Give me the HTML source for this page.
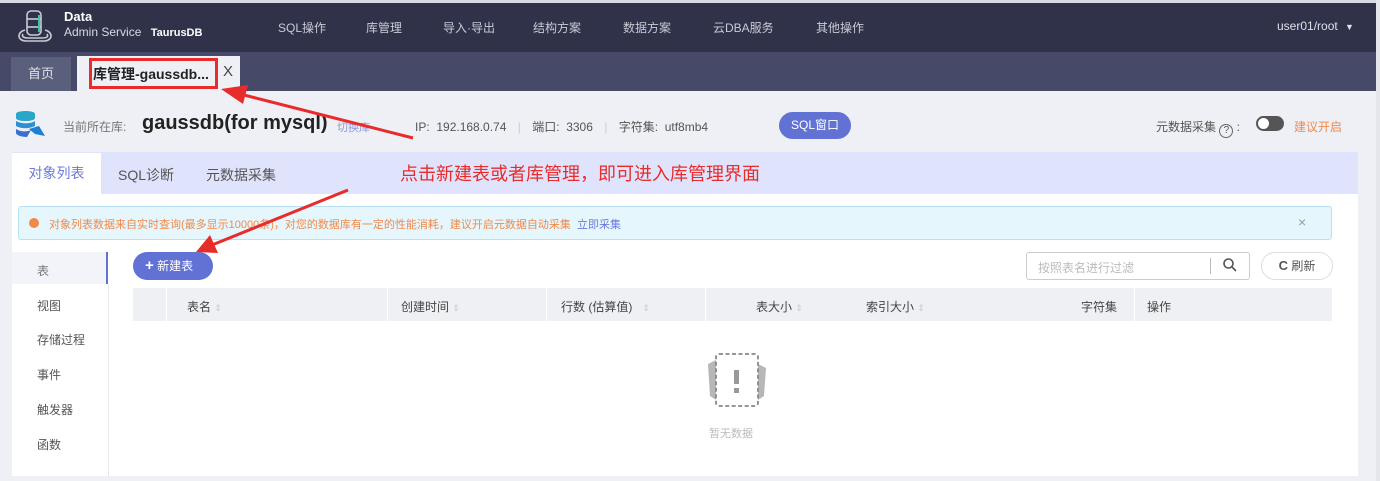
<!DOCTYPE html>
<html><head><meta charset="utf-8"><style>
*{margin:0;padding:0;box-sizing:border-box}
body{width:1380px;height:481px;overflow:hidden;background:#eef0f5;font-family:"Liberation Sans","Noto Sans CJK SC",sans-serif;position:relative;font-size:12px;color:#333}
.a{position:absolute;white-space:nowrap}
</style></head><body>
<div class="a" style="left:0;top:0;width:1380px;height:3px;background:#d8dae2"></div>
<div class="a" style="left:0;top:3px;width:1376px;height:49px;background:#2f3249"></div>
<div class="a" style="left:0;top:52px;width:1376px;height:39px;background:#464a68"></div>
<div class="a" style="left:1376px;top:0;width:4px;height:481px;background:#e4e6ec"></div>
<!-- logo -->
<svg class="a" style="left:15px;top:10px" width="40" height="34" viewBox="0 0 40 34" fill="none" stroke="#c9cbd6" stroke-width="1.6">
<rect x="12" y="1" width="14" height="24" rx="4"/><line x1="12" y1="9" x2="26" y2="9"/><line x1="12" y1="17" x2="26" y2="17"/>
<path d="M10 20 C2 22 2 30 10 31 L30 31 C38 30 38 22 30 20"/><path d="M8 24 C6 27 10 28 13 28 L27 28 C31 28 34 27 32 24"/>
<line x1="24" y1="5" x2="24" y2="22" stroke="#3bc7a2" stroke-width="2"/></svg>
<div class="a" style="left:64px;top:9px;color:#fff;font-size:13px;font-weight:bold">Data</div>
<div class="a" style="left:64px;top:25px;color:#d9dbe4;font-size:12px">Admin Service <b style="color:#fff;margin-left:6px;font-size:11px">TaurusDB</b></div>
<div class="a" style="left:278px;top:19px;color:#c9cbd6;font-size:12px;word-spacing:0">SQL操作</div>
<div class="a" style="left:366px;top:19px;color:#c9cbd6">库管理</div>
<div class="a" style="left:443px;top:19px;color:#c9cbd6">导入·导出</div>
<div class="a" style="left:533px;top:19px;color:#c9cbd6">结构方案</div>
<div class="a" style="left:623px;top:19px;color:#c9cbd6">数据方案</div>
<div class="a" style="left:713px;top:19px;color:#c9cbd6">云DBA服务</div>
<div class="a" style="left:816px;top:19px;color:#c9cbd6">其他操作</div>
<div class="a" style="left:1277px;top:19px;color:#dfe1e9;font-size:12px">user01/root <span style="font-size:9px;margin-left:4px">▼</span></div>
<!-- tabs -->
<div class="a" style="left:11px;top:57px;width:60px;height:34px;background:#5a5f7c;color:#e0e2ea;font-size:13px;text-align:center;line-height:34px">首页</div>
<div class="a" style="left:77px;top:56px;width:163px;height:35px;background:#eef0f5"></div>
<div class="a" style="left:89px;top:58px;width:129px;height:31px;border:3px solid #e82b2b"></div>
<div class="a" style="left:93px;top:64px;font-size:14px;font-weight:bold;color:#222">库管理-gaussdb...</div>
<div class="a" style="left:223px;top:63px;font-size:15px;color:#444">X</div>
<!-- db row -->
<svg class="a" style="left:13px;top:110px" width="34" height="30" viewBox="0 0 34 30">
<path d="M3 4 C3 0 22 0 22 4 L22 8 C22 12 3 12 3 8Z" fill="#2aa6c8"/><path d="M3 11 C8 14 18 14 22 11 L22 16 C16 19 8 19 3 16Z" fill="#2f8fd4"/><path d="M3 19 C8 22 14 22 18 20 L14 27 C8 27 3 25 3 23Z" fill="#3a6fd0"/><path d="M16 19 L26 16 L32 26 L22 24Z" fill="#1f7fd0"/></svg>
<div class="a" style="left:63px;top:118px;color:#777;font-size:12px">当前所在库:</div>
<div class="a" style="left:142px;top:112px;font-size:20px;font-weight:bold;color:#222">gaussdb(for mysql)</div>
<div class="a" style="left:337px;top:119px;color:#8c99d8;font-size:11px">切换库</div>
<div class="a" style="left:415px;top:118px;color:#555;font-size:12px">IP: &nbsp;192.168.0.74 <span style="color:#ccc;margin:0 8px">|</span> 端口: &nbsp;3306 <span style="color:#ccc;margin:0 8px">|</span> 字符集: &nbsp;utf8mb4</div>
<div class="a" style="left:779px;top:112px;width:72px;height:27px;border-radius:14px;background:#6272d4;color:#fff;font-size:12px;text-align:center;line-height:27px">SQL窗口</div>
<div class="a" style="left:1156px;top:118px;color:#555;font-size:12px">元数据采集 <span style="display:inline-block;width:14px;height:14px;border:1px solid #666;border-radius:50%;font-size:10px;text-align:center;line-height:12px;vertical-align:-2px">?</span> :</div>
<div class="a" style="left:1256px;top:116px;width:28px;height:15px;border-radius:8px;background:#555"><div style="position:absolute;left:2px;top:2px;width:11px;height:11px;border-radius:50%;background:#fff"></div></div>
<div class="a" style="left:1294px;top:118px;color:#f08a4b;font-size:12px">建议开启</div>
<!-- subtabs -->
<div class="a" style="left:12px;top:152px;width:1346px;height:42px;background:#dfe3fb"></div>
<div class="a" style="left:12px;top:153px;width:89px;height:41px;background:#fff;color:#6b7bd8;font-size:14px;text-align:center;line-height:41px">对象列表</div>
<div class="a" style="left:118px;top:165px;color:#555;font-size:14px">SQL诊断</div>
<div class="a" style="left:206px;top:165px;color:#555;font-size:14px">元数据采集</div>
<div class="a" style="left:400px;top:160px;color:#e82b2b;font-size:18px">点击新建表或者库管理，即可进入库管理界面</div>
<!-- panel -->
<div class="a" style="left:12px;top:194px;width:1346px;height:282px;background:#fff"></div>
<div class="a" style="left:18px;top:206px;width:1314px;height:34px;background:#e6f6fd;border:1px solid #b9e1f2;border-radius:3px"></div>
<div class="a" style="left:29px;top:218px;width:10px;height:10px;border-radius:50%;background:#f08a4b"></div>
<div class="a" style="left:49px;top:216px;color:#f08a4b;font-size:11px">对象列表数据来自实时查询(最多显示10000条)，对您的数据库有一定的性能消耗，建议开启元数据自动采集 &nbsp;<span style="color:#6b7bd8">立即采集</span></div>
<div class="a" style="left:1298px;top:214px;color:#999;font-size:14px">×</div>
<!-- side menu -->
<div class="a" style="left:12px;top:252px;width:96px;height:32px;background:#f3f4fa"></div>
<div class="a" style="left:106px;top:252px;width:2px;height:32px;background:#6272d4"></div>
<div class="a" style="left:108px;top:284px;width:1px;height:192px;background:#e8e8e8"></div>
<div class="a" style="left:37px;top:262px;color:#777;font-size:12px">表</div>
<div class="a" style="left:37px;top:297px;color:#555">视图</div>
<div class="a" style="left:37px;top:331px;color:#555">存储过程</div>
<div class="a" style="left:37px;top:366px;color:#555">事件</div>
<div class="a" style="left:37px;top:401px;color:#555">触发器</div>
<div class="a" style="left:37px;top:436px;color:#555">函数</div>
<div class="a" style="left:133px;top:252px;width:80px;height:28px;border-radius:14px;background:#6272d4;color:#fff;font-size:12px;line-height:28px;padding-left:12px"><b style="font-size:15px">+</b> 新建表</div>
<!-- search -->
<div class="a" style="left:1026px;top:252px;width:224px;height:28px;border:1px solid #ccc;border-radius:3px;background:#fff"></div>
<div class="a" style="left:1038px;top:259px;color:#bbb;font-size:12px">按照表名进行过滤</div>
<div class="a" style="left:1210px;top:258px;width:1px;height:16px;background:#bbb"></div>
<svg class="a" style="left:1222px;top:257px" width="16" height="16" viewBox="0 0 16 16" fill="none" stroke="#555" stroke-width="1.6"><circle cx="6.5" cy="6.5" r="4.5"/><line x1="10" y1="10" x2="14" y2="14"/></svg>
<div class="a" style="left:1261px;top:252px;width:72px;height:28px;border:1px solid #ddd;border-radius:14px;text-align:center;line-height:26px;color:#555;font-size:12px"><b style="font-size:13px">C</b> 刷新</div>
<!-- table header -->
<div class="a" style="left:133px;top:288px;width:1199px;height:33px;background:#eef0f4"></div>
<div class="a" style="left:166px;top:288px;width:1px;height:33px;background:#fff"></div>
<div class="a" style="left:387px;top:288px;width:1px;height:33px;background:#fff"></div>
<div class="a" style="left:546px;top:288px;width:1px;height:33px;background:#fff"></div>
<div class="a" style="left:705px;top:288px;width:1px;height:33px;background:#fff"></div>
<div class="a" style="left:1134px;top:288px;width:1px;height:33px;background:#fff"></div>
<div class="a" style="left:187px;top:298px;color:#444">表名 <span style="color:#ccc;font-size:9px">⇕</span></div>
<div class="a" style="left:401px;top:298px;color:#444">创建时间 <span style="color:#ccc;font-size:9px">⇕</span></div>
<div class="a" style="left:561px;top:298px;color:#444">行数 (估算值) &nbsp;&nbsp;<span style="color:#ccc;font-size:9px">⇕</span></div>
<div class="a" style="left:756px;top:298px;color:#444">表大小 <span style="color:#ccc;font-size:9px">⇕</span></div>
<div class="a" style="left:866px;top:298px;color:#444">索引大小 <span style="color:#ccc;font-size:9px">⇕</span></div>
<div class="a" style="left:1081px;top:298px;color:#444">字符集</div>
<div class="a" style="left:1147px;top:298px;color:#444">操作</div>
<!-- empty -->
<svg class="a" style="left:704px;top:350px" width="66" height="62" viewBox="0 0 66 62" fill="none">
<path d="M4 14 L12 10 L12 50 L6 46 Z" fill="#999" opacity=".7"/><path d="M54 14 L62 18 L60 46 L54 50Z" fill="#999" opacity=".7"/>
<rect x="12" y="4" width="42" height="52" rx="3" stroke="#888" stroke-width="1.8" stroke-dasharray="4 2.5" fill="#fff"/>
<rect x="30" y="20" width="5" height="14" fill="#999"/><rect x="30" y="38" width="5" height="5" fill="#999"/></svg>
<div class="a" style="left:709px;top:425px;color:#bbb;font-size:11px">暂无数据</div>
<!-- arrows -->
<svg class="a" style="left:0;top:0" width="1380" height="481" viewBox="0 0 1380 481">
<line x1="413" y1="138" x2="240" y2="94" stroke="#e82b2b" stroke-width="3"/>
<polygon points="221,89 248,85 243,104" fill="#e82b2b"/>
<line x1="348" y1="190" x2="212" y2="245" stroke="#e82b2b" stroke-width="3"/>
<polygon points="196,252 210,235 218,253" fill="#e82b2b"/>
</svg>
</body></html>
